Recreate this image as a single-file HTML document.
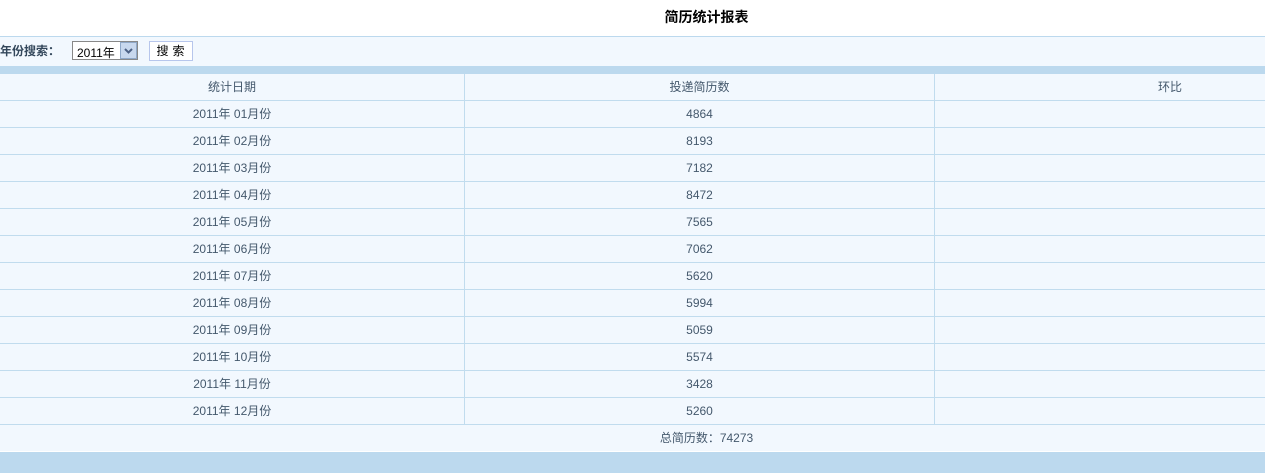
<!DOCTYPE html>
<html><head><meta charset="utf-8">
<style>
body{margin:0;width:1265px;height:473px;background:#fff;overflow:hidden;position:relative;font-family:"Liberation Sans","Noto Sans CJK SC","WenQuanYi Zen Hei",sans-serif;font-size:12px;color:#44586c}
.a{position:absolute}
.title{left:0;width:1413px;top:7px;text-align:center;font-weight:bold;font-size:14px;color:#000}
.row{position:absolute;left:0;width:1265px;height:26px;background:#f2f8fe;border-bottom:1px solid #c1dcee}
.c{position:absolute;top:0;height:26px;line-height:26px;text-align:center}
.c1{left:0;width:464px;border-right:1px solid #c1dcee}
.c2{left:465px;width:469px;border-right:1px solid #c1dcee}
.c3{left:935px;width:470px}
</style></head><body>
<div class="a title">简历统计报表</div>
<div class="a" style="left:0;top:36px;width:1265px;height:1px;background:#bcd9ee"></div>
<div class="a" style="left:0;top:37px;width:1265px;height:29px;background:#f2f8fe"></div>
<div class="a" style="left:0;top:44px;font-weight:bold;line-height:14px;color:#33475b">年份搜索：</div>
<div class="a" style="left:72px;top:41px;width:66px;height:19px;border:1px solid #888;background:#fff;box-sizing:border-box;">
<span class="a" style="left:4px;top:2px;color:#000;font-size:12px">2011年</span>
<div class="a" style="right:0;top:0;width:17px;height:17px;background:#c8d8ee;border:1px solid #8fa8c8;box-sizing:border-box"><svg width="15" height="15" style="position:absolute;left:0;top:0"><path d="M4 6l3.5 3.5L11 6" stroke="#4d6185" stroke-width="2" fill="none"/></svg></div>
</div>
<div class="a" style="left:149px;top:41px;width:44px;height:20px;border:1px solid #b7c6ec;background:#fff;box-sizing:border-box;text-align:center;line-height:18px;color:#000;letter-spacing:4px;padding-left:3px">搜索</div>
<div class="a" style="left:0;top:66px;width:1265px;height:8px;background:#bcd9ee"></div>
<div class="row" style="top:74px"><div class="c c1">统计日期</div><div class="c c2">投递简历数</div><div class="c c3">环比</div></div>
<div class="row" style="top:101px"><div class="c c1">2011年 01月份</div><div class="c c2">4864</div><div class="c c3"></div></div>
<div class="row" style="top:128px"><div class="c c1">2011年 02月份</div><div class="c c2">8193</div><div class="c c3"></div></div>
<div class="row" style="top:155px"><div class="c c1">2011年 03月份</div><div class="c c2">7182</div><div class="c c3"></div></div>
<div class="row" style="top:182px"><div class="c c1">2011年 04月份</div><div class="c c2">8472</div><div class="c c3"></div></div>
<div class="row" style="top:209px"><div class="c c1">2011年 05月份</div><div class="c c2">7565</div><div class="c c3"></div></div>
<div class="row" style="top:236px"><div class="c c1">2011年 06月份</div><div class="c c2">7062</div><div class="c c3"></div></div>
<div class="row" style="top:263px"><div class="c c1">2011年 07月份</div><div class="c c2">5620</div><div class="c c3"></div></div>
<div class="row" style="top:290px"><div class="c c1">2011年 08月份</div><div class="c c2">5994</div><div class="c c3"></div></div>
<div class="row" style="top:317px"><div class="c c1">2011年 09月份</div><div class="c c2">5059</div><div class="c c3"></div></div>
<div class="row" style="top:344px"><div class="c c1">2011年 10月份</div><div class="c c2">5574</div><div class="c c3"></div></div>
<div class="row" style="top:371px"><div class="c c1">2011年 11月份</div><div class="c c2">3428</div><div class="c c3"></div></div>
<div class="row" style="top:398px"><div class="c c1">2011年 12月份</div><div class="c c2">5260</div><div class="c c3"></div></div>
<div class="row" style="top:425px;border-bottom:none"><div class="c" style="left:0;width:1413px">总简历数：74273</div></div>
<div class="a" style="left:0;top:452px;width:1265px;height:21px;background:#bcd9ee"></div>
</body></html>
